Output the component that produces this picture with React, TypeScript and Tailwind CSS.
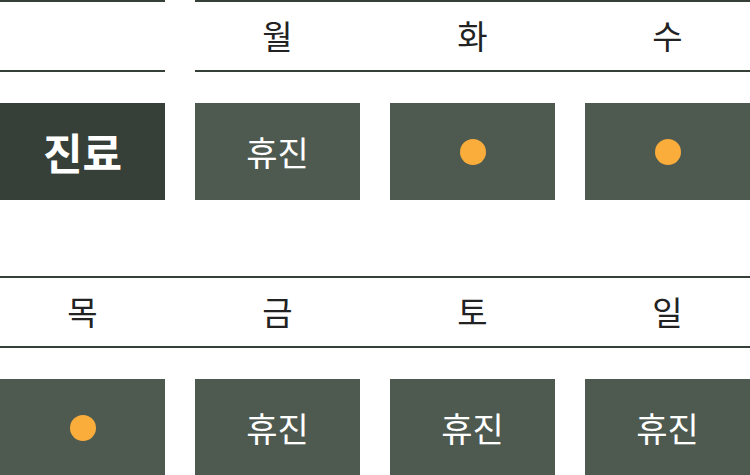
const font = { fontFamily: '"Noto Sans CJK KR", "Noto Sans", sans-serif' };

function Dot() {
  return <span className="block w-[26px] h-[26px] rounded-full bg-[#fbad3b]" />;
}

function Cell({ children }: { children: React.ReactNode }) {
  return (
    <div className="h-[97px] bg-[#4e5a50] flex items-center justify-center text-white text-[34px] font-normal">
      {children}
    </div>
  );
}

export default function App() {
  const top = ["월", "화", "수"];
  const bottom = ["목", "금", "토", "일"];

  return (
    <div className="w-[750px] h-[475px] overflow-hidden bg-white" style={font}>
      {/* row 1 */}
      <div className="flex gap-[30px]">
        <div className="w-[165px] shrink-0">
          <div className="h-[72px] border-y-2 border-[#364038]" />
          <div className="mt-[31px] h-[97px] bg-[#364038] flex items-center justify-center text-white text-[43px] font-bold">
            진료
          </div>
        </div>
        <div className="flex-1">
          <div className="h-[72px] border-y-2 border-[#364038] grid grid-cols-3 gap-[30px]">
            {top.map((d) => (
              <div key={d} className="flex items-center justify-center text-[33px] text-[#222]">
                {d}
              </div>
            ))}
          </div>
          <div className="mt-[31px] grid grid-cols-3 gap-[30px]">
            <Cell>휴진</Cell>
            <Cell>
              <Dot />
            </Cell>
            <Cell>
              <Dot />
            </Cell>
          </div>
        </div>
      </div>

      {/* row 2 */}
      <div className="mt-[76px]">
        <div className="h-[72px] border-y-2 border-[#364038] grid grid-cols-4 gap-[30px]">
          {bottom.map((d) => (
            <div key={d} className="flex items-center justify-center text-[33px] text-[#222]">
              {d}
            </div>
          ))}
        </div>
        <div className="mt-[31px] grid grid-cols-4 gap-[30px]">
          <Cell>
            <Dot />
          </Cell>
          <Cell>휴진</Cell>
          <Cell>휴진</Cell>
          <Cell>휴진</Cell>
        </div>
      </div>
    </div>
  );
}
